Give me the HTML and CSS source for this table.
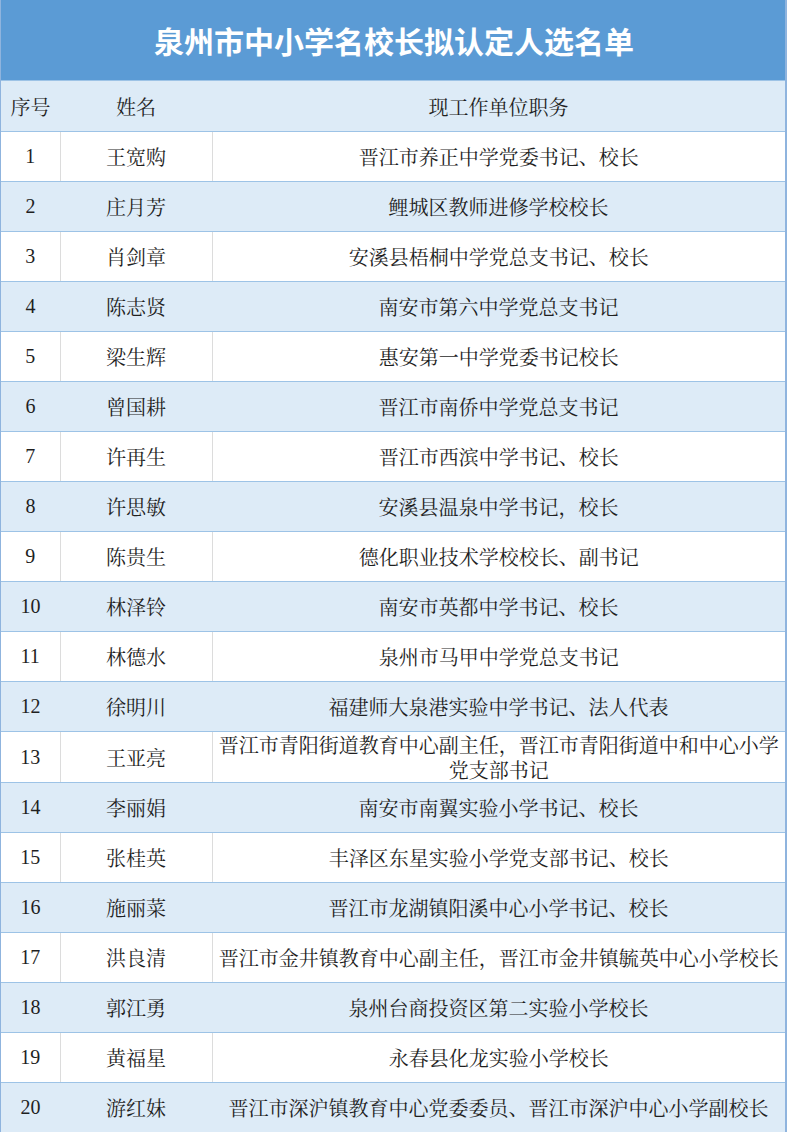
FILE: index.html
```html
<!DOCTYPE html>
<html lang="zh-CN">
<head>
<meta charset="utf-8">
<title>泉州市中小学名校长拟认定人选名单</title>
<link rel="stylesheet" href="styles.css">
</head>
<body>
<div class="sheet">
  <div class="title">泉州市中小学名校长拟认定人选名单</div>
  <table class="list">
    <colgroup><col class="c-no"><col class="c-name"><col class="c-job"></colgroup>
    <thead>
      <tr class="head"><th>序号</th><th>姓名</th><th>现工作单位职务</th></tr>
    </thead>
    <tbody>
      <tr><td class="num">1</td><td>王宽购</td><td>晋江市养正中学党委书记、校长</td></tr>
      <tr><td class="num">2</td><td>庄月芳</td><td>鲤城区教师进修学校校长</td></tr>
      <tr><td class="num">3</td><td>肖剑章</td><td>安溪县梧桐中学党总支书记、校长</td></tr>
      <tr><td class="num">4</td><td>陈志贤</td><td>南安市第六中学党总支书记</td></tr>
      <tr><td class="num">5</td><td>梁生辉</td><td>惠安第一中学党委书记校长</td></tr>
      <tr><td class="num">6</td><td>曾国耕</td><td>晋江市南侨中学党总支书记</td></tr>
      <tr><td class="num">7</td><td>许再生</td><td>晋江市西滨中学书记、校长</td></tr>
      <tr><td class="num">8</td><td>许思敏</td><td>安溪县温泉中学书记，校长</td></tr>
      <tr><td class="num">9</td><td>陈贵生</td><td>德化职业技术学校校长、副书记</td></tr>
      <tr><td class="num">10</td><td>林泽铃</td><td>南安市英都中学书记、校长</td></tr>
      <tr><td class="num">11</td><td>林德水</td><td>泉州市马甲中学党总支书记</td></tr>
      <tr><td class="num">12</td><td>徐明川</td><td>福建师大泉港实验中学书记、法人代表</td></tr>
      <tr><td class="num">13</td><td>王亚亮</td><td class="two">晋江市青阳街道教育中心副主任，晋江市青阳街道中和中心小学党支部书记</td></tr>
      <tr><td class="num">14</td><td>李丽娟</td><td>南安市南翼实验小学书记、校长</td></tr>
      <tr><td class="num">15</td><td>张桂英</td><td>丰泽区东星实验小学党支部书记、校长</td></tr>
      <tr><td class="num">16</td><td>施丽菜</td><td>晋江市龙湖镇阳溪中心小学书记、校长</td></tr>
      <tr><td class="num">17</td><td>洪良清</td><td>晋江市金井镇教育中心副主任，晋江市金井镇毓英中心小学校长</td></tr>
      <tr><td class="num">18</td><td>郭江勇</td><td>泉州台商投资区第二实验小学校长</td></tr>
      <tr><td class="num">19</td><td>黄福星</td><td>永春县化龙实验小学校长</td></tr>
      <tr><td class="num">20</td><td>游红妹</td><td>晋江市深沪镇教育中心党委委员、晋江市深沪中心小学副校长</td></tr>
    </tbody>
  </table>
</div>
</body>
</html>
```
FILE: styles.css
```css
html, body {
  margin: 0;
  padding: 0;
  background: #ffffff;
}
.sheet {
  width: 787px;
  box-sizing: border-box;
  border-left: 1px solid #8fb4de;
  border-right: 2px solid #8fb4de;
  border-bottom: 2px solid #8fb4de;
  font-family: "Noto Serif CJK SC", "Liberation Serif", "Noto Sans CJK SC", serif;
  color: #1f1f1f;
}
.title {
  height: 80px;
  background: #5b9bd5;
  color: #ffffff;
  font-family: "Noto Sans CJK SC", sans-serif;
  font-weight: 700;
  font-size: 30px;
  display: flex;
  align-items: center;
  justify-content: center;
  padding-left: 2px;
}
.list {
  width: 100%;
  border-collapse: collapse;
  table-layout: fixed;
}
.c-no { width: 59px; }
.c-name { width: 152px; }
.list th,
.list td {
  height: 49px;
  padding: 0;
  text-align: center;
  vertical-align: middle;
  font-size: 20px;
  font-weight: 400;
  line-height: 25px;
  border-bottom: 1px solid #9dc3e6;
  font-family: "Noto Serif CJK SC", "Noto Sans CJK SC", serif;
}
.list th {
  background: #ddebf7;
  height: 50px;
  border-top: 1px solid #9dc3e6;
}
.list td.num {
  font-family: "Liberation Serif", serif;
}
.list tbody tr:nth-child(odd) td {
  background: #ffffff;
}
.list tbody tr:nth-child(odd) td + td {
  border-left: 1px solid #dcdcdc;
}
.list tbody tr:nth-child(even) td {
  background: #ddebf7;
}
.list td.two {
  line-height: 25px;
}
```
